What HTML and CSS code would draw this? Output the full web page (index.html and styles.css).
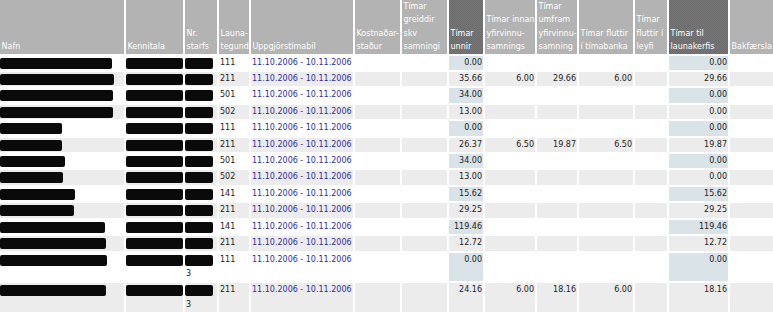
FILE: index.html
```html
<!DOCTYPE html>
<html>

<head>
    <title>Uppgjör tíma</title>
    <link rel="stylesheet" href="styles.css">
</head>

<body>

    <!-- Hours report -->
    <table class="report">
        <thead>
            <tr>
                <th class="c-nafn">Nafn</th>
                <th class="c-kt">Kennitala</th>
                <th class="c-nr">Nr.<br>starfs</th>
                <th class="c-lt">Launa-<br>tegund</th>
                <th class="c-tb">Uppgjörstímabil</th>
                <th class="c-ks">Kostnaðar-<br>staður</th>
                <th class="c-gr">Tímar<br>greiddir<br>skv<br>samningi</th>
                <th class="c-un key">Tímar<br>unnir</th>
                <th class="c-in">Tímar innan<br>yfirvinnu-<br>samnings</th>
                <th class="c-um">Tímar<br>umfram<br>yfirvinnu-<br>samning</th>
                <th class="c-fb">Tímar fluttir<br>í tímabanka</th>
                <th class="c-fl">Tímar<br>fluttir í<br>leyfi</th>
                <th class="c-lk key">Tímar til<br>launakerfis</th>
                <th class="c-bk">Bakfærsla</th>
            </tr>
        </thead>
        <tbody>
            <tr>
                <td><span class="hidden" style="width: 112px;"></span></td>
                <td><span class="hidden kt"></span></td>
                <td><span class="hidden nr"></span></td>
                <td>111</td>
                <td class="period">11.10.2006 - 10.11.2006</td>
                <td></td>
                <td></td>
                <td class="num hl">0.00</td>
                <td class="num"></td>
                <td class="num"></td>
                <td class="num"></td>
                <td></td>
                <td class="num hl">0.00</td>
                <td></td>
            </tr>
            <tr>
                <td><span class="hidden" style="width: 114px;"></span></td>
                <td><span class="hidden kt"></span></td>
                <td><span class="hidden nr"></span></td>
                <td>211</td>
                <td class="period">11.10.2006 - 10.11.2006</td>
                <td></td>
                <td></td>
                <td class="num hl">35.66</td>
                <td class="num">6.00</td>
                <td class="num">29.66</td>
                <td class="num">6.00</td>
                <td></td>
                <td class="num hl">29.66</td>
                <td></td>
            </tr>
            <tr>
                <td><span class="hidden" style="width: 113px;"></span></td>
                <td><span class="hidden kt"></span></td>
                <td><span class="hidden nr"></span></td>
                <td>501</td>
                <td class="period">11.10.2006 - 10.11.2006</td>
                <td></td>
                <td></td>
                <td class="num hl">34.00</td>
                <td class="num"></td>
                <td class="num"></td>
                <td class="num"></td>
                <td></td>
                <td class="num hl">0.00</td>
                <td></td>
            </tr>
            <tr>
                <td><span class="hidden" style="width: 113px;"></span></td>
                <td><span class="hidden kt"></span></td>
                <td><span class="hidden nr"></span></td>
                <td>502</td>
                <td class="period">11.10.2006 - 10.11.2006</td>
                <td></td>
                <td></td>
                <td class="num hl">13.00</td>
                <td class="num"></td>
                <td class="num"></td>
                <td class="num"></td>
                <td></td>
                <td class="num hl">0.00</td>
                <td></td>
            </tr>
            <tr>
                <td><span class="hidden" style="width: 62px;"></span></td>
                <td><span class="hidden kt"></span></td>
                <td><span class="hidden nr"></span></td>
                <td>111</td>
                <td class="period">11.10.2006 - 10.11.2006</td>
                <td></td>
                <td></td>
                <td class="num hl">0.00</td>
                <td class="num"></td>
                <td class="num"></td>
                <td class="num"></td>
                <td></td>
                <td class="num hl">0.00</td>
                <td></td>
            </tr>
            <tr>
                <td><span class="hidden" style="width: 62px;"></span></td>
                <td><span class="hidden kt"></span></td>
                <td><span class="hidden nr"></span></td>
                <td>211</td>
                <td class="period">11.10.2006 - 10.11.2006</td>
                <td></td>
                <td></td>
                <td class="num hl">26.37</td>
                <td class="num">6.50</td>
                <td class="num">19.87</td>
                <td class="num">6.50</td>
                <td></td>
                <td class="num hl">19.87</td>
                <td></td>
            </tr>
            <tr>
                <td><span class="hidden" style="width: 65px;"></span></td>
                <td><span class="hidden kt"></span></td>
                <td><span class="hidden nr"></span></td>
                <td>501</td>
                <td class="period">11.10.2006 - 10.11.2006</td>
                <td></td>
                <td></td>
                <td class="num hl">34.00</td>
                <td class="num"></td>
                <td class="num"></td>
                <td class="num"></td>
                <td></td>
                <td class="num hl">0.00</td>
                <td></td>
            </tr>
            <tr>
                <td><span class="hidden" style="width: 63px;"></span></td>
                <td><span class="hidden kt"></span></td>
                <td><span class="hidden nr"></span></td>
                <td>502</td>
                <td class="period">11.10.2006 - 10.11.2006</td>
                <td></td>
                <td></td>
                <td class="num hl">13.00</td>
                <td class="num"></td>
                <td class="num"></td>
                <td class="num"></td>
                <td></td>
                <td class="num hl">0.00</td>
                <td></td>
            </tr>
            <tr>
                <td><span class="hidden" style="width: 75px;"></span></td>
                <td><span class="hidden kt"></span></td>
                <td><span class="hidden nr"></span></td>
                <td>141</td>
                <td class="period">11.10.2006 - 10.11.2006</td>
                <td></td>
                <td></td>
                <td class="num hl">15.62</td>
                <td class="num"></td>
                <td class="num"></td>
                <td class="num"></td>
                <td></td>
                <td class="num hl">15.62</td>
                <td></td>
            </tr>
            <tr>
                <td><span class="hidden" style="width: 74px;"></span></td>
                <td><span class="hidden kt"></span></td>
                <td><span class="hidden nr"></span></td>
                <td>211</td>
                <td class="period">11.10.2006 - 10.11.2006</td>
                <td></td>
                <td></td>
                <td class="num hl">29.25</td>
                <td class="num"></td>
                <td class="num"></td>
                <td class="num"></td>
                <td></td>
                <td class="num hl">29.25</td>
                <td></td>
            </tr>
            <tr>
                <td><span class="hidden" style="width: 105px;"></span></td>
                <td><span class="hidden kt"></span></td>
                <td><span class="hidden nr"></span></td>
                <td>141</td>
                <td class="period">11.10.2006 - 10.11.2006</td>
                <td></td>
                <td></td>
                <td class="num hl">119.46</td>
                <td class="num"></td>
                <td class="num"></td>
                <td class="num"></td>
                <td></td>
                <td class="num hl">119.46</td>
                <td></td>
            </tr>
            <tr>
                <td><span class="hidden" style="width: 106px;"></span></td>
                <td><span class="hidden kt"></span></td>
                <td><span class="hidden nr"></span></td>
                <td>211</td>
                <td class="period">11.10.2006 - 10.11.2006</td>
                <td></td>
                <td></td>
                <td class="num hl">12.72</td>
                <td class="num"></td>
                <td class="num"></td>
                <td class="num"></td>
                <td></td>
                <td class="num hl">12.72</td>
                <td></td>
            </tr>
            <tr>
                <td><span class="hidden" style="width: 107px;"></span></td>
                <td><span class="hidden kt"></span></td>
                <td><span class="hidden nr"></span>3</td>
                <td>111</td>
                <td class="period">11.10.2006 - 10.11.2006</td>
                <td></td>
                <td></td>
                <td class="num hl">0.00</td>
                <td class="num"></td>
                <td class="num"></td>
                <td class="num"></td>
                <td></td>
                <td class="num hl">0.00</td>
                <td></td>
            </tr>
            <tr>
                <td><span class="hidden" style="width: 106px;"></span></td>
                <td><span class="hidden kt"></span></td>
                <td><span class="hidden nr"></span>3</td>
                <td>211</td>
                <td class="period">11.10.2006 - 10.11.2006</td>
                <td></td>
                <td></td>
                <td class="num hl">24.16</td>
                <td class="num">6.00</td>
                <td class="num">18.16</td>
                <td class="num">6.00</td>
                <td></td>
                <td class="num hl">18.16</td>
                <td></td>
            </tr>
        </tbody>
    </table>

</body>

</html>
```

FILE: styles.css
```css
/* Page */
html {
    overflow: hidden;
}

body {
    margin: 0;
    background-color: #ffffff;
    font-family: "DejaVu Sans", Verdana, sans-serif;
}

/* Report table */
.report {
    table-layout: fixed;
    width: 777px;
    margin: -2px 0 0 -2px;
    border-collapse: separate;
    border-spacing: 2px;
}

.report th,
.report td {
    box-sizing: border-box;
    overflow: hidden;
    white-space: nowrap;
}

.report th {
    padding: 0 1px 0 1.5px;
    background-color: #b3b3b3;
    color: #ffffff;
    font-size: 8px;
    font-weight: normal;
    line-height: 13.4px;
    text-align: left;
    vertical-align: bottom;
}

.report th.key {
    background: repeating-conic-gradient(#6b6b6b 0 25%, #777777 0 50%) 0 0 / 2px 2px;
}

.report td {
    padding: 0 1px;
    color: #222222;
    font-size: 8px;
    line-height: 14.4px;
    vertical-align: top;
}

.report tbody tr:nth-child(even) td {
    background-color: #ececec;
}

.report tbody td.hl {
    background-color: #d9e3e8;
}

.report td.num {
    text-align: right;
}

.report td.period {
    color: #2f2f9c;
}

/* Column widths */
.c-nafn { width: 124px; }
.c-kt { width: 57px; }
.c-nr { width: 32px; }
.c-lt { width: 30px; }
.c-tb { width: 102px; }
.c-ks { width: 45px; }
.c-gr { width: 45px; }
.c-un { width: 34px; }
.c-in { width: 50px; }
.c-um { width: 40px; }
.c-fb { width: 54px; }
.c-fl { width: 32px; }
.c-lk { width: 59px; }
.c-bk { width: 43px; }

/* Blacked-out personal data */
.hidden {
    display: block;
    height: 11px;
    margin: 2px 0 1.4px -1px;
    border-radius: 2px;
    background-color: #0a0a0a;
}

.hidden.kt {
    width: 57px;
}

.hidden.nr {
    width: 28px;
}
```
